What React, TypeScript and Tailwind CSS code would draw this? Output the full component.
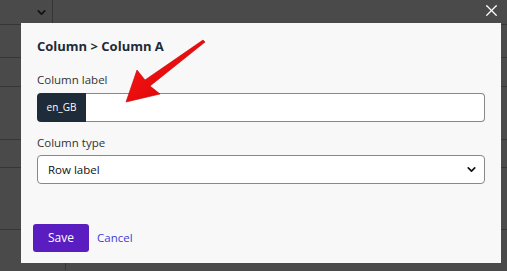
import { X, ChevronDown } from 'lucide-react';

function BackgroundTable() {
  // dimmed table behind the modal
  const rows = [33, 29, 53, 28, 62];
  return (
    <div className="flex flex-col">
      <div className="flex h-[25px] border-b border-[#363636]">
        <div className="flex w-[53px] items-center justify-end border-r border-[#363636] pr-[4px]">
          <ChevronDown className="h-[13px] w-[13px] text-[#111]" strokeWidth={3} />
        </div>
      </div>
      {rows.map((h, i) => (
        <div key={i} className="border-b border-[#363636]" style={{ height: h }} />
      ))}
      <div className="flex h-[40px]">
        <div className="w-[66px] border-r border-[#363636]" />
      </div>
    </div>
  );
}

function Arrow() {
  return (
    <svg className="pointer-events-none absolute left-0 top-0" width="507" height="271" viewBox="0 0 507 271">
      <defs>
        <linearGradient id="ar" x1="0" y1="0" x2="1" y2="1">
          <stop offset="0" stopColor="#ff1a1a" />
          <stop offset="1" stopColor="#d40000" />
        </linearGradient>
      </defs>
      <path
        d="M205 42 L150 86 L160 94 L126 102 L137 70 L145 80 L203 40 Z"
        fill="url(#ar)"
        stroke="#c00000"
        strokeWidth="0.6"
        strokeLinejoin="round"
      />
    </svg>
  );
}

export default function App() {
  return (
    <div
      className="relative h-[271px] w-[507px] overflow-hidden bg-[#4a4a4a]"
      style={{ fontFamily: '"Open Sans", "Noto Sans", sans-serif' }}
    >
      <BackgroundTable />

      <button className="absolute right-[6px] top-[1px] text-white">
        <X className="h-[19px] w-[19px]" strokeWidth={1.6} />
      </button>

      <div className="absolute left-[21px] top-[23px] h-[240px] w-[480px] bg-[#f8f8f8] px-[16px] pt-[13px]">
        <h2 className="text-[13px] font-bold leading-[20px] text-[#1f2a37]">Column &gt; Column A</h2>

        <div className="mt-[16px]">
          <label className="block text-[11.5px] leading-[16px] text-[#333]">Column label</label>
          <div className="mt-[5px] flex h-[29px] w-[448px]">
            <span className="flex w-[49px] shrink-0 items-center justify-center rounded-l-[4px] bg-[#1e2b38] text-[10px] text-white">
              en_GB
            </span>
            <input
              type="text"
              className="min-w-0 flex-1 rounded-r-[4px] border border-l-0 border-[#888] bg-white px-2 text-[12px] outline-none"
            />
          </div>
        </div>

        <div className="mt-[13px]">
          <label className="block text-[11.5px] leading-[16px] text-[#333]">Column type</label>
          <div className="relative mt-[4px] h-[29px] w-[448px]">
            <select className="h-full w-full appearance-none rounded-[4px] border border-[#888] bg-white pl-[10px] text-[11.5px] text-[#111] outline-none">
              <option>Row label</option>
            </select>
            <ChevronDown
              className="pointer-events-none absolute right-[7px] top-[8px] h-[13px] w-[13px] text-[#111]"
              strokeWidth={3}
            />
          </div>
        </div>

        <div className="-ml-[4px] mt-[40px] flex items-center gap-[8px]">
          <button className="h-[28px] w-[56px] rounded-[3px] bg-[#5a1ec0] text-[12px] text-white">Save</button>
          <button className="text-[11.5px] text-[#3d3dd8]">Cancel</button>
        </div>
      </div>

      <Arrow />
    </div>
  );
}
